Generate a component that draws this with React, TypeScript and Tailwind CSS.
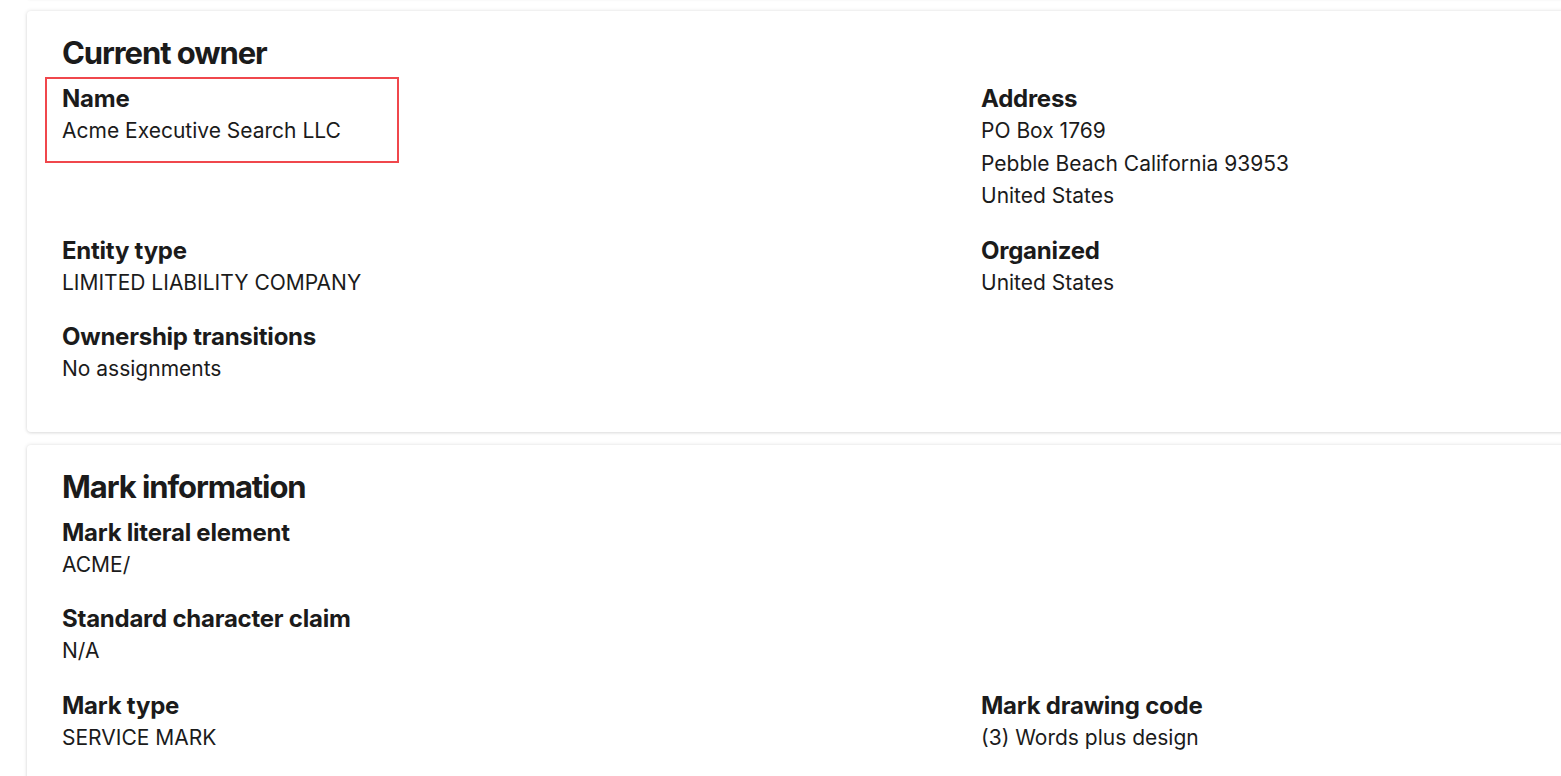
import React from 'react';

type Field = {
  label: string;
  lines: string[];
  highlight?: boolean;
};

function FieldBlock({ field }: { field: Field }) {
  return (
    <div className="relative">
      {field.highlight && (
        <div className="absolute -left-[17px] -top-[6px] w-[354px] h-[86px] border-2 border-[#f0474c] pointer-events-none" />
      )}
      <div className="text-[24px] leading-[32px] font-bold tracking-[-0.01em] text-[#1b1b1b]">{field.label}</div>
      {field.lines.map((line, i) => (
        <div key={i} className="text-[21px] leading-[32.5px] text-[#1b1b1b]">
          {line}
        </div>
      ))}
    </div>
  );
}

function Card({ title, rows }: { title: string; rows: (Field | null)[][] }) {
  return (
    <section className="bg-white w-[1600px] rounded-[4px] shadow-[0_0_4px_rgba(0,0,0,0.12),0_1px_3px_rgba(0,0,0,0.08)] pl-[35px] pt-[16px] pb-[46px]">
      <h2 className="text-[31px] leading-[52px] font-bold tracking-[-0.035em] text-[#1b1b1b] mb-[4px]">{title}</h2>
      <div className="flex flex-col gap-[22px]">
        {rows.map((row, i) => (
          <div key={i} className="grid grid-cols-[919px_1fr]">
            {row.map((f, j) => (f ? <FieldBlock key={j} field={f} /> : <div key={j} />))}
          </div>
        ))}
      </div>
    </section>
  );
}

export default function App() {
  return (
    <div
      className="w-[1561px] h-[776px] overflow-hidden bg-white"
      style={{ fontFamily: 'Inter, "Liberation Sans", sans-serif' }}
    >
      <div className="pl-[27px] -mt-[26px] flex flex-col gap-[13px]">
        <div className="bg-white w-[1600px] h-[24px] rounded-[4px] shadow-[0_0_4px_rgba(0,0,0,0.12),0_1px_3px_rgba(0,0,0,0.08)]" />
        <Card
          title="Current owner"
          rows={[
            [
              { label: 'Name', lines: ['Acme Executive Search LLC'], highlight: true },
              { label: 'Address', lines: ['PO Box 1769', 'Pebble Beach California 93953', 'United States'] },
            ],
            [
              { label: 'Entity type', lines: ['LIMITED LIABILITY COMPANY'] },
              { label: 'Organized', lines: ['United States'] },
            ],
            [{ label: 'Ownership transitions', lines: ['No assignments'] }, null],
          ]}
        />
        <Card
          title="Mark information"
          rows={[
            [{ label: 'Mark literal element', lines: ['ACME/'] }, null],
            [{ label: 'Standard character claim', lines: ['N/A'] }, null],
            [
              { label: 'Mark type', lines: ['SERVICE MARK'] },
              { label: 'Mark drawing code', lines: ['(3) Words plus design'] },
            ],
          ]}
        />
      </div>
    </div>
  );
}
